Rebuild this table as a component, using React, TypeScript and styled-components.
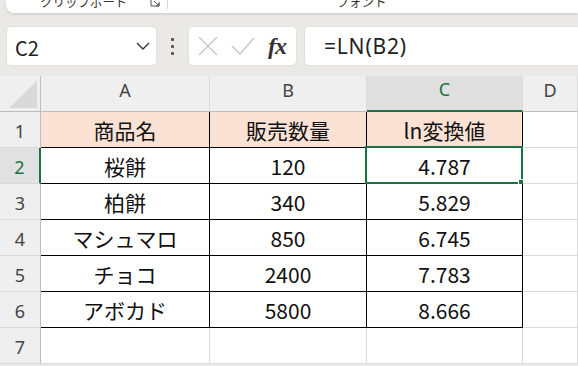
import React from "react";
import styled, { createGlobalStyle, css } from "styled-components";

const GREEN = "#1e7145";
const FONT = `"Noto Sans CJK JP", "Noto Sans", sans-serif`;

const GlobalStyle = createGlobalStyle`
  html, body { margin: 0; padding: 0; }
  body {
    background: #ebe9e5;
    font-family: ${FONT};
    overflow: hidden;
    width: 578px;
    height: 366px;
  }
`;

const Page = styled.div`
  display: flex;
  flex-direction: column;
  width: 578px;
  height: 366px;
  overflow: hidden;
  & > * {
    flex-shrink: 0;
  }
`;

/* ---------- Ribbon (clipped) ---------- */
const Ribbon = styled.div`
  margin-left: 6px;
  height: 13px;
  background: #fff;
  border-bottom-left-radius: 8px;
  box-shadow: 0 1px 3px rgba(0, 0, 0, 0.14);
  display: flex;
  align-items: flex-start;
  overflow: hidden;
`;

const RibbonLabel = styled.span<{ $ml: number }>`
  margin-left: ${(p) => p.$ml}px;
  margin-top: -5px;
  font-size: 12.5px;
  line-height: 13px;
  color: #333;
  white-space: nowrap;
`;

const Launcher = styled.svg`
  margin-left: 22px;
  margin-top: -3px;
  flex: none;
`;

const RibbonSep = styled.div`
  margin-left: 7px;
  width: 1px;
  height: 9px;
  background: #d6d6d6;
`;

/* ---------- Formula bar ---------- */
const FormulaBar = styled.div`
  margin-top: 13px;
  height: 40px;
  display: flex;
  align-items: stretch;
  padding-left: 6px;
`;

const Box = styled.div`
  background: #fff;
  border: 1px solid #e2e0db;
  border-radius: 5px;
  box-sizing: border-box;
  display: flex;
  align-items: center;
`;

const NameBox = styled(Box)`
  width: 151px;
  padding: 0 6px 0 8px;
  justify-content: space-between;
`;

const NameText = styled.span`
  font-size: 20px;
  color: #222;
  padding-top: 3px;
`;

const Grip = styled.div`
  width: 31px;
  display: flex;
  flex-direction: column;
  align-items: center;
  justify-content: center;
  gap: 4px;
  & > i {
    width: 3px;
    height: 3px;
    border-radius: 1px;
    background: #555;
  }
`;

const FxBox = styled(Box)`
  width: 109px;
  padding-left: 9px;
  gap: 13px;
`;

const FxText = styled.span`
  font-family: "Liberation Serif", "DejaVu Serif", serif;
  font-style: italic;
  font-weight: bold;
  font-size: 24px;
  color: #333;
  letter-spacing: -1px;
`;

const FormulaInput = styled(Box)`
  margin-left: 7px;
  margin-right: -12px;
  flex: 1;
  padding-left: 19px;
`;

const FormulaText = styled.span`
  font-family: "Noto Sans", sans-serif;
  font-size: 21px;
  color: #222;
  letter-spacing: 0.8px;
`;

/* ---------- Sheet ---------- */
const Sheet = styled.div`
  margin-top: 10px;
  display: grid;
  grid-template-columns: 41px 169px 157px 156px 1fr;
  grid-auto-rows: 36px;
`;

const HeadBase = css`
  background: #efefef;
  box-sizing: border-box;
  display: flex;
  align-items: center;
  justify-content: center;
  font-family: "Noto Sans", ${FONT};
  font-size: 18px;
  color: #444;
`;

const Corner = styled.div`
  ${HeadBase};
  border-right: 1px solid #bdbdbd;
  border-bottom: 1px solid #bdbdbd;
  justify-content: flex-end;
  align-items: flex-end;
  padding: 0 3px 3px 0;
`;

const ColHead = styled.div<{ $sel?: boolean }>`
  ${HeadBase};
  padding-bottom: 8px;
  border-right: 1px solid #d9d9d9;
  border-bottom: 1px solid #bdbdbd;
  ${(p) =>
    p.$sel &&
    css`
      background: #e0e0e0;
      color: ${GREEN};
      border-bottom: 2px solid ${GREEN};
    `}
`;

const RowHead = styled.div<{ $sel?: boolean }>`
  ${HeadBase};
  border-right: 1px solid #bdbdbd;
  border-bottom: 1px solid #d9d9d9;
  padding-top: 2px;
  ${(p) =>
    p.$sel &&
    css`
      background: #e1e1e1;
      color: ${GREEN};
      border-right: 2px solid ${GREEN};
    `}
`;

const Cell = styled.div<{ $table?: boolean; $head?: boolean }>`
  position: relative;
  box-sizing: border-box;
  background: ${(p) => (p.$head ? "#fbe2d5" : "#fff")};
  border-right: 1px solid ${(p) => (p.$table ? "#000" : "#dadada")};
  border-bottom: 1px solid ${(p) => (p.$table ? "#000" : "#dadada")};
  display: flex;
  align-items: center;
  justify-content: center;
  font-size: 21px;
  color: #111;
  white-space: nowrap;
`;

const Selection = styled.div`
  position: absolute;
  top: -2px;
  left: -2px;
  right: -1px;
  bottom: -1px;
  border: 2px solid ${GREEN};
  pointer-events: none;
`;

const Handle = styled.div`
  position: absolute;
  right: -5px;
  bottom: -5px;
  width: 6px;
  height: 6px;
  background: ${GREEN};
  border: 1px solid #fff;
`;

const cols = ["A", "B", "C", "D"];
const data: string[][] = [
  ["商品名", "販売数量", "ln変換値"],
  ["桜餅", "120", "4.787"],
  ["柏餅", "340", "5.829"],
  ["マシュマロ", "850", "6.745"],
  ["チョコ", "2400", "7.783"],
  ["アボカド", "5800", "8.666"],
];

export default function App() {
  const rows = [...data, ["", "", ""]];
  return (
    <>
      <GlobalStyle />
      <Page>
        <Ribbon>
          <RibbonLabel $ml={34}>クリップボード</RibbonLabel>
          <Launcher width="10" height="10" viewBox="0 0 10 10">
            <path d="M1 1h4M1 1v8h8V5" stroke="#555" strokeWidth="1" fill="none" />
            <path d="M4 4l5 5M9 6v3H6" stroke="#555" strokeWidth="1" fill="none" />
          </Launcher>
          <RibbonSep />
          <RibbonLabel $ml={169}>フォント</RibbonLabel>
        </Ribbon>

        <FormulaBar>
          <NameBox>
            <NameText>C2</NameText>
            <svg width="14" height="8" viewBox="0 0 14 8">
              <path d="M1 1l6 6 6-6" stroke="#333" strokeWidth="1.4" fill="none" />
            </svg>
          </NameBox>
          <Grip>
            <i />
            <i />
            <i />
          </Grip>
          <FxBox>
            <svg width="20" height="20" viewBox="0 0 20 20">
              <path d="M1 1l18 18M19 1L1 19" stroke="#c9c9c9" strokeWidth="1.5" fill="none" />
            </svg>
            <svg width="24" height="18" viewBox="0 0 24 18">
              <path d="M1 9l8 8L23 1" stroke="#c9c9c9" strokeWidth="1.5" fill="none" />
            </svg>
            <FxText>fx</FxText>
          </FxBox>
          <FormulaInput>
            <FormulaText>=LN(B2)</FormulaText>
          </FormulaInput>
        </FormulaBar>

        <Sheet>
          <Corner>
            <svg width="28" height="27" viewBox="0 0 28 27">
              <path d="M28 0V27H0Z" fill="#d9d9d9" />
            </svg>
          </Corner>
          {cols.map((c) => (
            <ColHead key={c} $sel={c === "C"}>
              {c}
            </ColHead>
          ))}
          {rows.map((r, i) => {
            const rowNum = i + 1;
            const inTable = i < data.length;
            return (
              <React.Fragment key={rowNum}>
                <RowHead $sel={rowNum === 2}>{rowNum}</RowHead>
                {r.map((v, j) => (
                  <Cell key={j} $table={inTable} $head={i === 0}>
                    {v}
                    {rowNum === 2 && j === 2 && (
                      <Selection>
                        <Handle />
                      </Selection>
                    )}
                  </Cell>
                ))}
                <Cell />
              </React.Fragment>
            );
          })}
        </Sheet>
      </Page>
    </>
  );
}
